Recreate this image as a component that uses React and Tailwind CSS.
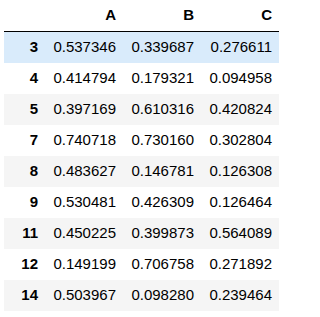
export default function App() {
  const rows = [
    ["3", "0.537346", "0.339687", "0.276611"],
    ["4", "0.414794", "0.179321", "0.094958"],
    ["5", "0.397169", "0.610316", "0.420824"],
    ["7", "0.740718", "0.730160", "0.302804"],
    ["8", "0.483627", "0.146781", "0.126308"],
    ["9", "0.530481", "0.426309", "0.126464"],
    ["11", "0.450225", "0.399873", "0.564089"],
    ["12", "0.149199", "0.706758", "0.271892"],
    ["14", "0.503967", "0.098280", "0.239464"],
  ];
  return (
    <div className="w-[320px] h-[317px] bg-white pl-[4px] text-[15px] text-black" style={{ fontFamily: '"Liberation Sans", Arial, sans-serif' }}>
      <div className="flex flex-col w-[275px]">
        <div className="flex h-[32px] items-center border-b border-black font-bold">
          <div className="w-[41px]" />
          <div className="w-[78px] text-right pr-[7px]">A</div>
          <div className="w-[78px] text-right pr-[7px]">B</div>
          <div className="w-[78px] text-right pr-[7px]">C</div>
        </div>
        {rows.map((r, i) => (
          <div
            key={r[0]}
            className={
              "flex h-[31px] items-center " +
              (i === 0 ? "bg-[#d9ebfb]" : i % 2 === 0 ? "bg-[#f5f5f5]" : "bg-white")
            }
          >
            <div className="w-[41px] text-right pr-[7px] font-bold">{r[0]}</div>
            <div className="w-[78px] text-right pr-[7px]">{r[1]}</div>
            <div className="w-[78px] text-right pr-[7px]">{r[2]}</div>
            <div className="w-[78px] text-right pr-[7px]">{r[3]}</div>
          </div>
        ))}
      </div>
    </div>
  );
}
